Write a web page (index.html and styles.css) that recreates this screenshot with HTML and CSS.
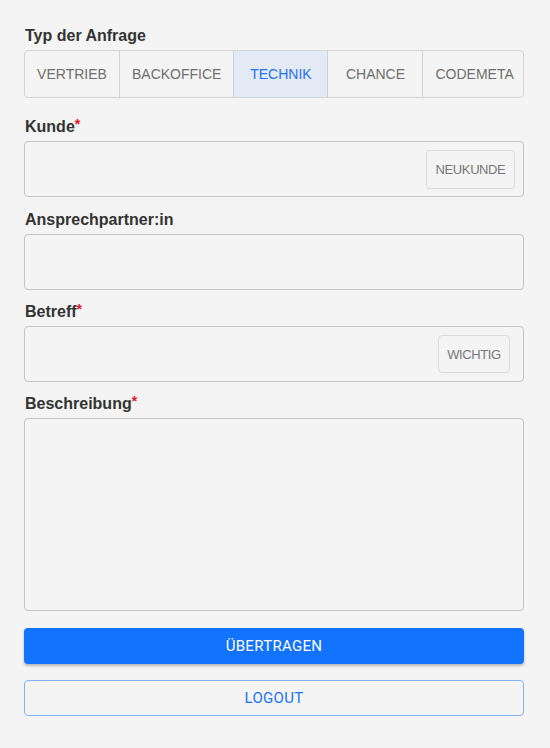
FILE: index.html
```html
<!DOCTYPE html>
<html lang="de">
<head>
<meta charset="utf-8">
<link rel="stylesheet" href="styles.css">
</head>
<body>
<form class="form">
  <div class="field field-type">
    <div class="label">Typ der Anfrage</div>
    <div class="toggle-group">
      <button type="button" class="toggle">VERTRIEB</button>
      <button type="button" class="toggle">BACKOFFICE</button>
      <button type="button" class="toggle active">TECHNIK</button>
      <button type="button" class="toggle">CHANCE</button>
      <button type="button" class="toggle">CODEMETA</button>
    </div>
  </div>
  <div class="field field-kunde">
    <div class="label">Kunde<span class="req">*</span></div>
    <div class="input input-kunde">
      <button type="button" class="adorn adorn-kunde">NEUKUNDE</button>
    </div>
  </div>
  <div class="field">
    <div class="label">Ansprechpartner:in</div>
    <div class="input"></div>
  </div>
  <div class="field">
    <div class="label">Betreff<span class="req">*</span></div>
    <div class="input input-betreff">
      <button type="button" class="adorn adorn-betreff">WICHTIG</button>
    </div>
  </div>
  <div class="field">
    <div class="label">Beschreibung<span class="req">*</span></div>
    <div class="textarea"></div>
  </div>
  <button type="button" class="btn btn-primary">ÜBERTRAGEN</button>
  <button type="button" class="btn btn-outline">LOGOUT</button>
</form>
</body>
</html>
```
FILE: styles.css
```css
html, body {
  margin: 0;
  padding: 0;
  background: #f4f4f4;
}
body {
  font-family: "Liberation Sans", Arial, sans-serif;
  color: #333;
}
.form {
  display: flex;
  flex-direction: column;
  padding: 26px 26px 0 24px;
}
.field {
  display: flex;
  flex-direction: column;
  margin-bottom: 12px;
}
.field-type {
  margin-bottom: 19px;
}
.field-kunde {
  margin-bottom: 13px;
}
.label {
  font-size: 16px;
  font-weight: bold;
  line-height: 20px;
  height: 20px;
  margin-bottom: 4px;
  color: #333;
  padding-left: 1px;
}
.req {
  color: #e8112d;
  font-size: 14px;
  vertical-align: top;
  line-height: 14px;
}
.toggle-group {
  display: flex;
  height: 48px;
  border: 1px solid #d4d4d4;
  border-radius: 4px;
  box-sizing: border-box;
  overflow: hidden;
}
.toggle {
  font-family: "Liberation Sans", Arial, sans-serif;
  font-size: 14px;
  color: #6e6e6e;
  background: transparent;
  border: none;
  border-left: 1px solid #d4d4d4;
  padding: 0 12px;
  margin: 0;
  height: 100%;
  min-width: 95px;
  box-sizing: border-box;
  flex: 0 0 auto;
}
.toggle:first-child {
  border-left: none;
  min-width: 94px;
}
.toggle:last-child {
  flex: 1 1 auto;
}
.toggle.active {
  background: #e3eaf5;
  color: #2672f0;
  border-left-color: #c6d2e4;
  border-right: 1px solid #c6d2e4;
}
.toggle.active + .toggle {
  border-left: none;
  min-width: 94px;
}
.input {
  height: 56px;
  border: 1px solid #c4c4c4;
  border-radius: 4px;
  box-sizing: border-box;
  display: flex;
  align-items: center;
  justify-content: flex-end;
}
.input-kunde {
  padding-right: 8px;
}
.input-betreff {
  padding-right: 13px;
}
.adorn {
  font-family: "Liberation Sans", Arial, sans-serif;
  font-size: 13px;
  letter-spacing: -0.4px;
  color: #777;
  background: transparent;
  border: 1px solid #dcdcdc;
  border-radius: 4px;
  padding: 0;
  box-sizing: border-box;
}
.adorn-kunde {
  height: 39px;
  width: 89px;
  margin-top: 1px;
}
.adorn-betreff {
  height: 38px;
  width: 72px;
}
.textarea {
  height: 193px;
  border: 1px solid #c4c4c4;
  border-radius: 4px;
  box-sizing: border-box;
  margin-bottom: 5px;
}
.btn {
  font-family: Roboto, "Liberation Sans", sans-serif;
  font-size: 15px;
  font-weight: 400;
  height: 36px;
  border-radius: 4px;
  box-sizing: border-box;
  letter-spacing: 0.3px;
  padding: 0;
}
.btn-primary {
  background: #1173ff;
  color: #fff;
  border: none;
  box-shadow: 0 2px 3px rgba(0, 0, 0, 0.25);
  margin-bottom: 16px;
}
.btn-outline {
  background: transparent;
  color: #1a73f5;
  border: 1px solid #80b1fb;
}
```
